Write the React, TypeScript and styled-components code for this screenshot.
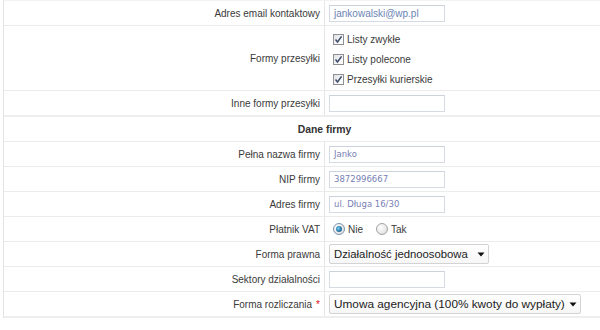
import React from 'react';
import styled, { createGlobalStyle } from 'styled-components';

const Global = createGlobalStyle`
  html, body { margin: 0; padding: 0; background: #fff; overflow: hidden; }
  body { font-family: "Liberation Sans", Arial, sans-serif; color: #333; }
`;

const Page = styled.div`
  width: 600px;
  height: 330px;
  overflow: hidden;
  padding-left: 3px;
  box-sizing: border-box;
`;

const Table = styled.div`
  width: 641px;
  border-left: 1px solid #e3e3e3;
  border-top: 1px solid #f2f2f2;
  display: flex;
  flex-direction: column;
`;

const Row = styled.div<{ $h?: number; $thick?: boolean }>`
  display: flex;
  height: ${p => p.$h ?? 24}px;
  border-bottom: ${p => (p.$thick ? 2 : 1)}px solid ${p => (p.$thick ? '#eeeeee' : '#ebebeb')};
`;

const Label = styled.div`
  width: 321px;
  flex: none;
  box-sizing: border-box;
  border-right: 1px solid #e6e6e6;
  padding-right: 4px;
  display: flex;
  align-items: center;
  justify-content: flex-end;
  font-size: 10px;
  color: #3a3a3a;
  white-space: nowrap;
`;

const Star = styled.span`
  color: #d11;
  margin-left: 4px;
`;

const Value = styled.div`
  flex: 1;
  padding-left: 4px;
  display: flex;
  align-items: center;
`;

const Header = styled.div`
  flex: 1;
  display: flex;
  align-items: center;
  justify-content: center;
  font-size: 10.4px;
  font-weight: bold;
  color: #333;
`;

const TextInput = styled.div<{ $mono?: boolean }>`
  width: 116px;
  height: 17px;
  box-sizing: border-box;
  border: 1px solid #d6dbe3;
  border-top-color: #ccd2dc;
  background: #fff;
  padding-left: 4px;
  display: flex;
  align-items: center;
  font-family: ${p => (p.$mono ? '"DejaVu Sans", Tahoma, sans-serif' : '"Liberation Sans", Arial, sans-serif')};
  font-size: ${p => (p.$mono ? '8.5px' : '10px')};
  color: ${p => (p.$mono ? '#7880b4' : '#6a84b3')};
  white-space: nowrap;
`;

const CheckList = styled.div`
  display: flex;
  flex-direction: column;
  padding-top: 3px;
  align-self: stretch;
  justify-content: center;
  box-sizing: border-box;
`;

const CheckItem = styled.label`
  height: 19.6px;
  display: flex;
  align-items: center;
  gap: 3px;
  font-size: 10px;
  color: #3a3a3a;
  padding-left: 4px;
`;

const Box = styled.span`
  width: 11px;
  height: 11px;
  box-sizing: border-box;
  border: 1px solid #8e9093;
  background: linear-gradient(135deg, #dfe1e4 0%, #f6f6f7 60%, #ffffff 100%);
  display: inline-flex;
  align-items: center;
  justify-content: center;
`;

const RadioGroup = styled.div`
  display: flex;
  align-items: center;
  padding-left: 4px;
  font-size: 10px;
  color: #3a3a3a;
`;

const RadioItem = styled.label`
  display: flex;
  align-items: center;
  gap: 3px;
  margin-right: 13px;
`;

const Radio = styled.span<{ $on?: boolean }>`
  width: 12px;
  height: 12px;
  box-sizing: border-box;
  border-radius: 50%;
  border: 1px solid ${p => (p.$on ? '#7c94ad' : '#a3a3a3')};
  background: radial-gradient(circle at 35% 35%, #ffffff 0%, #e8e8e8 60%, #d4d4d4 100%);
  display: inline-flex;
  align-items: center;
  justify-content: center;
  &::after {
    content: '';
    display: ${p => (p.$on ? 'block' : 'none')};
    width: 6px;
    height: 6px;
    border-radius: 50%;
    background: radial-gradient(circle at 40% 40%, #7ad0f0 0%, #2a79a8 55%, #123f60 100%);
  }
`;

const Select = styled.div<{ $w: number; $fs: number }>`
  width: ${p => p.$w}px;
  height: 20px;
  box-sizing: border-box;
  border: 1px solid #d3d3d3;
  border-radius: 2px;
  background: linear-gradient(#ffffff, #f6f6f6);
  display: flex;
  align-items: center;
  justify-content: space-between;
  padding: 0 3px 0 4px;
  font-size: ${p => p.$fs}px;
  color: #222;
  white-space: nowrap;
`;

const Check = () => (
  <Box>
    <svg width="9" height="9" viewBox="0 0 9 9">
      <path d="M1.5 4.6 L3.5 7 L7.6 1.4" fill="none" stroke="#3b4a6b" strokeWidth="1.5" />
    </svg>
  </Box>
);

const Arrow = () => (
  <svg width="8" height="5" viewBox="0 0 8 5">
    <path d="M0.5 0.5 H7.5 L4 4.5 Z" fill="#111" />
  </svg>
);

export default function App() {
  return (
    <>
      <Global />
      <Page>
        <Table>
          <Row>
            <Label>Adres email kontaktowy</Label>
            <Value>
              <TextInput>jankowalski@wp.pl</TextInput>
            </Value>
          </Row>
          <Row $h={64}>
            <Label>Formy przesyłki</Label>
            <Value>
              <CheckList>
                <CheckItem><Check />Listy zwykłe</CheckItem>
                <CheckItem><Check />Listy polecone</CheckItem>
                <CheckItem><Check />Przesyłki kurierskie</CheckItem>
              </CheckList>
            </Value>
          </Row>
          <Row $thick>
            <Label>Inne formy przesyłki</Label>
            <Value>
              <TextInput />
            </Value>
          </Row>
          <Row>
            <Header>Dane firmy</Header>
          </Row>
          <Row>
            <Label>Pełna nazwa firmy</Label>
            <Value>
              <TextInput $mono>Janko</TextInput>
            </Value>
          </Row>
          <Row>
            <Label>NIP firmy</Label>
            <Value>
              <TextInput $mono>3872996667</TextInput>
            </Value>
          </Row>
          <Row>
            <Label>Adres firmy</Label>
            <Value>
              <TextInput $mono>ul. Długa 16/30</TextInput>
            </Value>
          </Row>
          <Row>
            <Label>Płatnik VAT</Label>
            <Value>
              <RadioGroup>
                <RadioItem><Radio $on />Nie</RadioItem>
                <RadioItem><Radio />Tak</RadioItem>
              </RadioGroup>
            </Value>
          </Row>
          <Row>
            <Label>Forma prawna</Label>
            <Value>
              <Select $w={160} $fs={11.3}>
                <span>Działalność jednoosobowa</span>
                <Arrow />
              </Select>
            </Value>
          </Row>
          <Row>
            <Label>Sektory działalności</Label>
            <Value>
              <TextInput />
            </Value>
          </Row>
          <Row $thick>
            <Label>Forma rozliczania<Star>*</Star></Label>
            <Value>
              <Select $w={252} $fs={11.8}>
                <span>Umowa agencyjna (100% kwoty do wypłaty)</span>
                <Arrow />
              </Select>
            </Value>
          </Row>
        </Table>
      </Page>
    </>
  );
}
